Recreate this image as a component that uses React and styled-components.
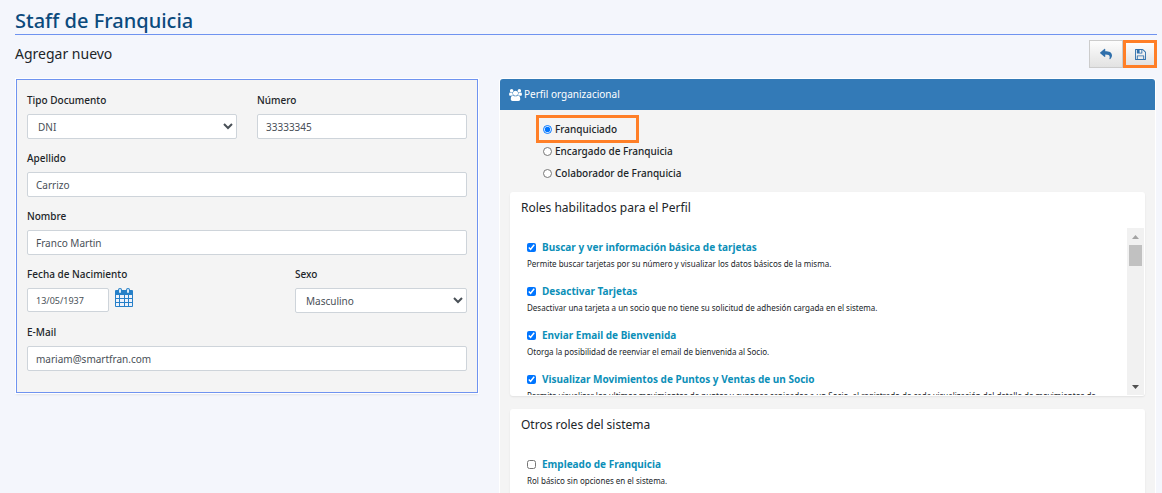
import React, { useRef, useState } from 'react';
import styled, { createGlobalStyle } from 'styled-components';
import { FaReply } from 'react-icons/fa';

const GlobalStyle = createGlobalStyle`
    * {
        box-sizing: border-box;
    }
    body {
        margin: 0;
        height: 100vh;
        overflow: hidden;
        background: #f4f6fc;
        color: #212529;
        font-family: "Noto Sans", "Open Sans", sans-serif;
        font-size: 10px;
        line-height: 18px;
    }
    input, select, button {
        font-family: inherit;
    }
`

const Page = styled.main`
    padding: 8px 5px 0 15px;
`

const Title = styled.h1`
    margin: 0;
    border-bottom: 1px solid #6f93f0;
    color: #0b4a7d;
    font-size: 20px;
    font-weight: 500;
    line-height: 26px;
`

const Toolbar = styled.div`
    display: flex;
    justify-content: space-between;
    align-items: flex-start;
    height: 44px;
    padding-top: 5px;
`

const Subtitle = styled.h2`
    margin: 0;
    font-size: 14px;
    font-weight: 400;
    line-height: 28px;
`

const Actions = styled.div`
    display: flex;
`

const ActionButton = styled.button`
    display: flex;
    justify-content: center;
    align-items: center;
    width: 34px;
    height: 28px;
    padding: 0;
    border: ${props => props.$marked ? "3px solid #ff7f27" : "1px solid #ccc"};
    background: linear-gradient(#fdfdfd, #e2e2e2);
    color: #2f6fab;
    font-size: 12px;
    cursor: pointer;
`

const Columns = styled.div`
    display: grid;
    grid-template-columns: minmax(0, 462fr) minmax(0, 655fr);
    align-items: start;
    gap: 22px;
    padding: 0 2px 0 1px;
`

const FormPanel = styled.form`
    display: flex;
    flex-direction: column;
    gap: 10px;
    padding: 11px 10px 21px;
    border: 1px solid #6f93f0;
    background: #f4f4f4;
    box-shadow: 0 0 0 1px #fff, 0 2px 2px rgba(0, 0, 0, 0.08);
`

const Row = styled.div`
    display: grid;
    grid-template-columns: ${props => props.$columns};
    gap: 20px;
`

const Field = styled.div`
    display: flex;
    flex-direction: column;
    gap: 5px;
    min-width: 0;
`

const Label = styled.label`
    font-weight: 500;
`

const Input = styled.input`
    width: 100%;
    height: 25px;
    padding: 0 8px;
    border: 1px solid #ced4da;
    border-radius: 2px;
    background: #fff;
    color: #495057;
    font-size: 10px;
`

const DateInput = styled(Input)`
    width: 82px;
    height: 24px;
    font-size: 9px;
`

const Select = styled.select`
    width: 100%;
    height: 25px;
    padding: 0 6px;
    border: 1px solid #ced4da;
    border-radius: 2px;
    background: #fff;
    color: #495057;
    font-size: 10px;
`

const DateBox = styled.div`
    display: flex;
    align-items: flex-start;
    gap: 6px;
`

const IconButton = styled.button`
    display: flex;
    padding: 0;
    border: none;
    background: none;
    cursor: pointer;
`

const ProfilePanel = styled.section`
    border-radius: 3px;
    background: #f4f4f4;
    box-shadow: 0 0 0 1px #fff;
`

const PanelHeader = styled.h3`
    display: flex;
    align-items: center;
    gap: 2px;
    margin: 0;
    padding: 0 9px;
    border-radius: 3px 3px 0 0;
    background: #337ab7;
    color: #fff;
    font-size: 10px;
    font-weight: 400;
    line-height: 31px;
`

const RadioList = styled.div`
    display: flex;
    flex-direction: column;
    align-items: flex-start;
    padding: 8px 39px;
`

const RadioOption = styled.label`
    display: flex;
    align-items: center;
    gap: 3px;
    height: 22px;
    padding: 0 19px 0 4px;
    outline: ${props => props.$marked ? "3px solid #ff7f27" : "none"};
    font-weight: 500;
`

const Radio = styled.input`
    width: 9px;
    height: 9px;
    margin: 0;
`

const Card = styled.div`
    margin: 0 10px 13px;
    border-radius: 3px;
    background: #fff;
    box-shadow: 0 1px 2px rgba(0, 0, 0, 0.08);
`

const CardTitle = styled.h4`
    margin: 0;
    padding: 7px 11px 11px;
    font-size: 12px;
    font-weight: 400;
`

const ScrollArea = styled.div`
    display: flex;
    height: 168px;
    padding: 0 1px 1px 0;
`

const RoleList = styled.div`
    flex: 1;
    min-width: 0;
    padding: 10px 17px 0;
    overflow: hidden;
`

const Role = styled.div`
    height: 44px;
`

const RoleName = styled.label`
    display: flex;
    align-items: center;
    gap: 6px;
    color: #0c8fb8;
    font-weight: 700;
`

const Checkbox = styled.input`
    width: 9px;
    height: 9px;
    margin: 0;
`

const RoleText = styled.p`
    margin: 0;
    color: #212529;
    font-size: 8px;
    line-height: 16px;
    white-space: nowrap;
`

const ScrollBar = styled.div`
    display: flex;
    flex-direction: column;
    justify-content: space-between;
    width: 17px;
    background: #f1f1f1;
`

const Track = styled.div`
    flex: 1;
    padding: 0 2px;
`

const Thumb = styled.div`
    height: 21px;
    background: #c1c1c1;
`

const ScrollButton = styled.button`
    display: flex;
    justify-content: center;
    align-items: center;
    width: 17px;
    height: 17px;
    padding: 0;
    border: none;
    background: none;
    color: ${props => props.$dim ? "#a3a3a3" : "#505050"};
`

const profiles = ["Franquiciado", "Encargado de Franquicia", "Colaborador de Franquicia"];

const profileRoles = [
    { id: "buscar", name: "Buscar y ver información básica de tarjetas", text: "Permite buscar tarjetas por su número y visualizar los datos básicos de la misma." },
    { id: "desactivar", name: "Desactivar Tarjetas", text: "Desactivar una tarjeta a un socio que no tiene su solicitud de adhesión cargada en el sistema." },
    { id: "email", name: "Enviar Email de Bienvenida", text: "Otorga la posibilidad de reenviar el email de bienvenida al Socio." },
    { id: "movimientos", name: "Visualizar Movimientos de Puntos y Ventas de un Socio", text: "Permite visualizar los ultimos movimientos de puntos y cupones canjeados a un Socio, al registrado de cada visualización del detalle de movimientos de" },
];

const otherRoles = [
    { id: "empleado", name: "Empleado de Franquicia", text: "Rol básico sin opciones en el sistema." },
];

function UsersIcon() {
    return (
        <svg width="13" height="12" viewBox="0 0 1920 1792" fill="currentColor">
            <path d="M593 896q-162 5-265 128h-134q-82 0-138-40.500t-56-118.500q0-353 124-353 6 0 43.500 21t97.500 42.500 119 21.500q67 0 133-23-5 37-5 66 0 139 81 256zM1664 1533q0 120-73 189.500t-194 69.500h-874q-121 0-194-69.500t-73-189.500q0-53 3.500-103.500t14-109 26.500-108.500 43-97.500 62-81 85.500-53.500 111.500-20q10 0 43 21.500t73 48 107 48 135 21.500 135-21.500 107-48 73-48 43-21.500q61 0 111.500 20t85.500 53.500 62 81 43 97.500 26.500 108.500 14 109 3.500 103.500zM640 256q0 106-75 181t-181 75-181-75-75-181 75-181 181-75 181 75 75 181zM1344 640q0 159-112.500 271.500t-271.500 112.500-271.500-112.500-112.500-271.500 112.500-271.500 271.500-112.500 271.500 112.500 112.500 271.500zM1920 865q0 78-56 118.500t-138 40.500h-134q-103-123-265-128 81-117 81-256 0-29-5-66 66 23 133 23 59 0 119-21.500t97.500-42.500 43.500-21q124 0 124 353zM1792 256q0 106-75 181t-181 75-181-75-75-181 75-181 181-75 181 75 75 181z" />
        </svg>
    )
}

function SaveIcon() {
    return (
        <svg width="11" height="13" viewBox="0 0 1536 1792" fill="currentColor">
            <path d="M384 1536h768v-384h-768v384zM1280 1536h128v-896q0-14-10-38.500t-20-34.500l-281-281q-10-10-34-20t-39-10v416q0 40-28 68t-68 28h-576q-40 0-68-28t-28-68v-416h-128v1280h128v-416q0-40 28-68t68-28h832q40 0 68 28t28 68v416zM896 608v-320q0-13-9.500-22.500t-22.500-9.500h-192q-13 0-22.500 9.500t-9.500 22.500v320q0 13 9.500 22.500t22.500 9.500h192q13 0 22.500-9.500t9.500-22.500zM1536 640v928q0 40-28 68t-68 28h-1344q-40 0-68-28t-28-68v-1344q0-40 28-68t68-28h928q40 0 88 20t76 48l280 280q28 28 48 76t20 88z" />
        </svg>
    )
}

function CalendarIcon() {
    return (
        <svg width="18" height="20" viewBox="0 0 18 20">
            <rect x="0" y="2" width="18" height="17" rx="1" fill="#2680c8" />
            <rect x="3" y="0" width="4" height="6" rx="2" fill="#2680c8" />
            <rect x="11" y="0" width="4" height="6" rx="2" fill="#2680c8" />
            <rect x="4" y="1" width="2" height="4" rx="1" fill="#dcebf7" />
            <rect x="12" y="1" width="2" height="4" rx="1" fill="#dcebf7" />
            <path d="M1 7h3v3H1zM5 7h4v3H5zM10 7h3v3h-3zM14 7h3v3h-3zM1 11h3v3H1zM5 11h4v3H5zM10 11h3v3h-3zM14 11h3v3h-3zM1 15h3v3H1zM5 15h4v3H5zM10 15h3v3h-3zM14 15h3v3h-3z" fill="#eef2fb" />
        </svg>
    )
}

function Arrow({ up }) {
    return (
        <svg width="7" height="4" viewBox="0 0 7 4">
            <path d={up ? "M0 4L3.500 0L7 4z" : "M0 0L3.500 4L7 0z"} fill="currentColor" />
        </svg>
    )
}

function RoleItem({ role, checked }) {
    return (
        <Role>
            <RoleName htmlFor={role.id}>
                <Checkbox id={role.id} type="checkbox" defaultChecked={checked} />
                {role.name}
            </RoleName>
            <RoleText>{role.text}</RoleText>
        </Role>
    )
}

function App() {
    const [profile, setProfile] = useState(profiles[0]);
    const list = useRef(null);
    const scroll = (step) => list.current.scrollBy(0, step);

    return (
        <Page>
            <GlobalStyle />
            <Title>Staff de Franquicia</Title>
            <Toolbar>
                <Subtitle>Agregar nuevo</Subtitle>
                <Actions>
                    <ActionButton type="button" aria-label="Volver"><FaReply /></ActionButton>
                    <ActionButton type="submit" form="staff" aria-label="Guardar" $marked><SaveIcon /></ActionButton>
                </Actions>
            </Toolbar>
            <Columns>
                <FormPanel id="staff" onSubmit={(e) => e.preventDefault()}>
                    <Row $columns="1fr 1fr">
                        <Field>
                            <Label htmlFor="tipo">Tipo Documento</Label>
                            <Select id="tipo"><option>DNI</option></Select>
                        </Field>
                        <Field>
                            <Label htmlFor="numero">Número</Label>
                            <Input id="numero" defaultValue="33333345" />
                        </Field>
                    </Row>
                    <Field>
                        <Label htmlFor="apellido">Apellido</Label>
                        <Input id="apellido" defaultValue="Carrizo" />
                    </Field>
                    <Field>
                        <Label htmlFor="nombre">Nombre</Label>
                        <Input id="nombre" defaultValue="Franco Martin" />
                    </Field>
                    <Row $columns="248fr 172fr">
                        <Field>
                            <Label htmlFor="fecha">Fecha de Nacimiento</Label>
                            <DateBox>
                                <DateInput id="fecha" defaultValue="13/05/1937" />
                                <IconButton type="button" aria-label="Calendario"><CalendarIcon /></IconButton>
                            </DateBox>
                        </Field>
                        <Field>
                            <Label htmlFor="sexo">Sexo</Label>
                            <Select id="sexo"><option>Masculino</option></Select>
                        </Field>
                    </Row>
                    <Field>
                        <Label htmlFor="mail">E-Mail</Label>
                        <Input id="mail" type="email" defaultValue="mariam@smartfran.com" />
                    </Field>
                </FormPanel>
                <ProfilePanel>
                    <PanelHeader><UsersIcon />Perfil organizacional</PanelHeader>
                    <RadioList>
                        {profiles.map((name, i) => (
                            <RadioOption key={name} $marked={i === 0}>
                                <Radio type="radio" name="perfil" checked={profile === name} onChange={() => setProfile(name)} />
                                {name}
                            </RadioOption>
                        ))}
                    </RadioList>
                    <Card>
                        <CardTitle>Roles habilitados para el Perfil</CardTitle>
                        <ScrollArea>
                            <RoleList ref={list}>
                                {profileRoles.map(role => <RoleItem key={role.id} role={role} checked />)}
                            </RoleList>
                            <ScrollBar>
                                <ScrollButton type="button" aria-label="Subir" $dim onClick={() => scroll(-44)}><Arrow up /></ScrollButton>
                                <Track><Thumb /></Track>
                                <ScrollButton type="button" aria-label="Bajar" onClick={() => scroll(44)}><Arrow /></ScrollButton>
                            </ScrollBar>
                        </ScrollArea>
                    </Card>
                    <Card>
                        <CardTitle>Otros roles del sistema</CardTitle>
                        <RoleList>
                            {otherRoles.map(role => <RoleItem key={role.id} role={role} />)}
                        </RoleList>
                    </Card>
                </ProfilePanel>
            </Columns>
        </Page>
    )
}

export default App
